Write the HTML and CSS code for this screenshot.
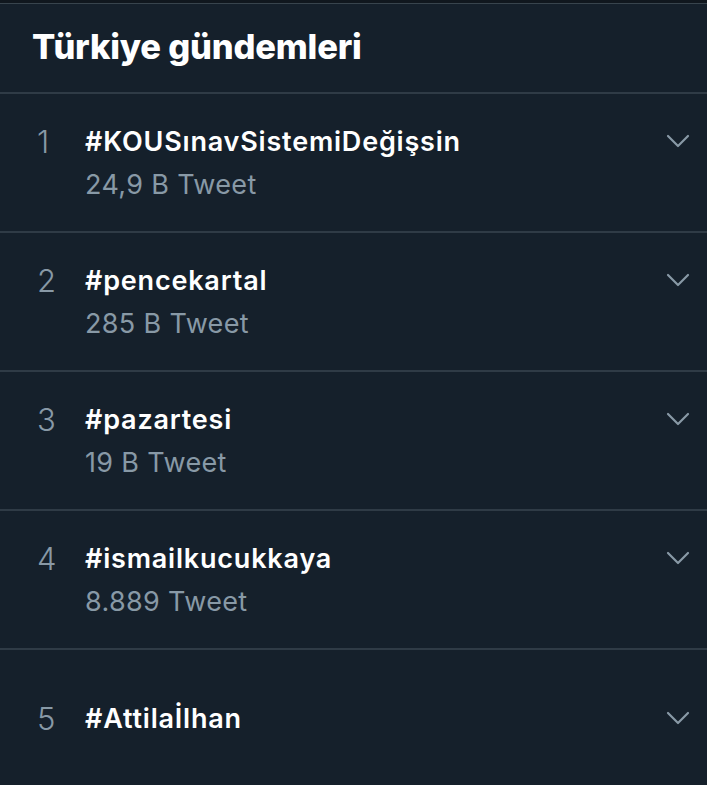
FILE: index.html
```html
<!DOCTYPE html>
<html lang="tr">
<head>
<meta charset="utf-8">
<link rel="stylesheet" href="styles.css">
</head>
<body>
<div class="panel">
  <div class="topbar"></div>
  <h1 class="title">Türkiye gündemleri</h1>
  <ul class="list">
    <li class="trend">
      <span class="rank">1</span>
      <div class="info">
        <div class="tag">#KOUSınavSistemiDeğişsin</div>
        <div class="count">24,9 B Tweet</div>
      </div>
      <svg class="chev" viewBox="0 0 24 14" width="24" height="14"><path d="M2 2 L12 12 L22 2" fill="none" stroke="currentColor" stroke-width="2.2" stroke-linecap="round" stroke-linejoin="round"/></svg>
    </li>
    <li class="trend">
      <span class="rank">2</span>
      <div class="info">
        <div class="tag">#pencekartal</div>
        <div class="count">285 B Tweet</div>
      </div>
      <svg class="chev" viewBox="0 0 24 14" width="24" height="14"><path d="M2 2 L12 12 L22 2" fill="none" stroke="currentColor" stroke-width="2.2" stroke-linecap="round" stroke-linejoin="round"/></svg>
    </li>
    <li class="trend">
      <span class="rank">3</span>
      <div class="info">
        <div class="tag">#pazartesi</div>
        <div class="count">19 B Tweet</div>
      </div>
      <svg class="chev" viewBox="0 0 24 14" width="24" height="14"><path d="M2 2 L12 12 L22 2" fill="none" stroke="currentColor" stroke-width="2.2" stroke-linecap="round" stroke-linejoin="round"/></svg>
    </li>
    <li class="trend">
      <span class="rank">4</span>
      <div class="info">
        <div class="tag">#ismailkucukkaya</div>
        <div class="count">8.889 Tweet</div>
      </div>
      <svg class="chev" viewBox="0 0 24 14" width="24" height="14"><path d="M2 2 L12 12 L22 2" fill="none" stroke="currentColor" stroke-width="2.2" stroke-linecap="round" stroke-linejoin="round"/></svg>
    </li>
    <li class="trend single">
      <span class="rank">5</span>
      <div class="info">
        <div class="tag">#Attilaİlhan</div>
      </div>
      <svg class="chev" viewBox="0 0 24 14" width="24" height="14"><path d="M2 2 L12 12 L22 2" fill="none" stroke="currentColor" stroke-width="2.2" stroke-linecap="round" stroke-linejoin="round"/></svg>
    </li>
  </ul>
</div>
</body>
</html>
```
FILE: styles.css
```css
html, body {
  margin: 0;
  padding: 0;
  background: #15202b;
}
body {
  font-family: Inter, "Noto Sans", sans-serif;
  color: #ffffff;
  width: 707px;
  height: 785px;
  overflow: hidden;
}
.panel {
  display: flex;
  flex-direction: column;
}
.topbar {
  height: 3px;
  background: #10171e;
  border-bottom: 1px solid #38444d;
}
.title {
  margin: 0;
  height: 90px;
  box-sizing: border-box;
  padding: 19px 0 0 32px;
  font-size: 34.5px;
  font-weight: 800;
  line-height: 48px;
  letter-spacing: -0.2px;
  border-bottom: 2px solid #2f3b46;
}
.list {
  list-style: none;
  margin: 0;
  padding: 0;
}
.trend {
  height: 139px;
  box-sizing: border-box;
  border-bottom: 2px solid #2f3b46;
  display: flex;
  align-items: flex-start;
  padding: 26px 0 0 0;
}
.rank {
  width: 85px;
  box-sizing: border-box;
  padding-left: 37px;
  font-size: 31px;
  font-weight: 300;
  color: #8899a6;
  line-height: 44px;
}
.info {
  flex: 1;
  display: flex;
  flex-direction: column;
}
.tag {
  font-size: 27px;
  font-weight: 600;
  line-height: 44px;
  letter-spacing: 0.8px;
}
.count {
  font-size: 27px;
  font-weight: 400;
  color: #8899a6;
  line-height: 42px;
  letter-spacing: 0.35px;
}
.chev {
  color: #8899a6;
  margin: 14px 17px 0 0;
}
.single {
  border-bottom: none;
  padding-top: 47px;
}
```
